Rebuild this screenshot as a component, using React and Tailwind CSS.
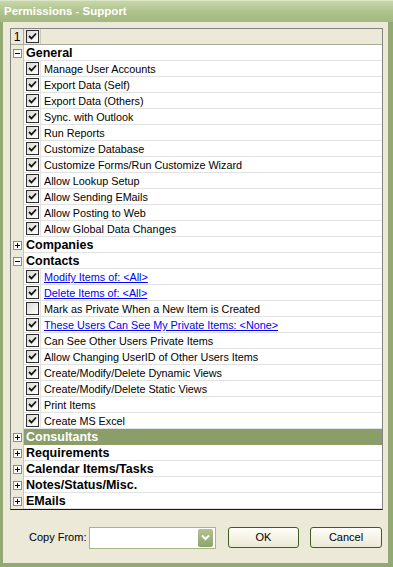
import React from 'react';

const rows = [
  { type: 'cat', label: 'General', open: true },
  { label: 'Manage User Accounts', on: true },
  { label: 'Export Data (Self)', on: true },
  { label: 'Export Data (Others)', on: true },
  { label: 'Sync. with Outlook', on: true },
  { label: 'Run Reports', on: true },
  { label: 'Customize Database', on: true },
  { label: 'Customize Forms/Run Customize Wizard', on: true },
  { label: 'Allow Lookup Setup', on: true },
  { label: 'Allow Sending EMails', on: true },
  { label: 'Allow Posting to Web', on: true },
  { label: 'Allow Global Data Changes', on: true },
  { type: 'cat', label: 'Companies' },
  { type: 'cat', label: 'Contacts', open: true },
  { label: 'Modify Items of: <All>', on: true, link: true },
  { label: 'Delete Items of: <All>', on: true, link: true },
  { label: 'Mark as Private When a New Item is Created', on: false },
  { label: 'These Users Can See My Private Items: <None>', on: true, link: true },
  { label: 'Can See Other Users Private Items', on: true },
  { label: 'Allow Changing UserID of Other Users Items', on: true },
  { label: 'Create/Modify/Delete Dynamic Views', on: true },
  { label: 'Create/Modify/Delete Static Views', on: true },
  { label: 'Print Items', on: true },
  { label: 'Create MS Excel', on: true },
  { type: 'cat', label: 'Consultants', selected: true },
  { type: 'cat', label: 'Requirements' },
  { type: 'cat', label: 'Calendar Items/Tasks' },
  { type: 'cat', label: 'Notes/Status/Misc.' },
  { type: 'cat', label: 'EMails' },
];

const Check = ({ on }) => (
  <div className="w-[13px] h-[13px] border border-[#2e2e2e] bg-gradient-to-br from-[#d9d9d2] to-white flex items-center justify-center">
    {on && (
      <svg width="9" height="9" viewBox="0 0 9 9">
        <path d="M1 4 L3.5 6.5 L8 1.5" fill="none" stroke="#111" strokeWidth="1.8" />
      </svg>
    )}
  </div>
);

const Expander = ({ open }) => (
  <div className="w-[9px] h-[9px] border border-[#8a8a8a] bg-white flex items-center justify-center relative">
    <div className="w-[5px] h-[1px] bg-black" />
    {!open && <div className="absolute w-[1px] h-[5px] bg-black" />}
  </div>
);

const App = () => {
  return (
    <div className="w-[393px] h-[567px] flex flex-col bg-[#93a972] font-['Liberation_Sans',Arial,sans-serif] text-[11px] text-black overflow-hidden">
      <div className="h-[22px] shrink-0 flex items-center pl-[4px] bg-gradient-to-b from-[#c8d7ab] via-[#afc28c] to-[#a2b781] border-t border-[#dbe6c6]">
        <span className="text-white font-bold text-[11.5px]">Permissions - Support</span>
      </div>
      <div className="flex-1 flex flex-col ml-[3px] mr-[5px] mb-[4px] bg-[#ece9d8] pt-[6px] pl-[7px] pr-[5px]">
        <div className="flex flex-col border border-[#848484] border-b-[#1a1a1a] bg-white">
          <div className="h-[16px] flex bg-[#ece9d8] border-b border-[#a9a799]">
            <div className="w-[13px] border-r border-[#a9a799] flex items-center justify-center text-[12px] leading-none">1</div>
            <div className="w-[17px] border-r border-[#c9c7ba] flex items-center justify-center">
              <Check on />
            </div>
            <div className="flex-1" />
          </div>
          {rows.map((r, i) => (
            <div key={i} className="h-[16px] flex">
              <div className="w-[13px] shrink-0 bg-[#ece9d8] border-r border-[#c8c6b9] flex items-center justify-center">
                {r.type === 'cat' && <Expander open={r.open} />}
              </div>
              {r.type === 'cat' ? (
                <div className={`flex-1 flex items-center pl-[2px] pt-[1px] font-bold text-[12.5px] border-b ${r.selected ? 'bg-[#8b9d69] text-white border-[#8b9d69]' : 'border-[#e2e2e2]'}`}>
                  {r.label}
                </div>
              ) : (
                <>
                  <div className="w-[17px] shrink-0 border-r border-b border-[#e2e2e2] flex items-center justify-center">
                    <Check on={r.on} />
                  </div>
                  <div className="flex-1 flex items-center pl-[3px] pt-[1px] border-b border-[#e2e2e2]">
                    <span className={`text-[10.8px] ${r.link ? 'text-[#0000ff] underline' : ''}`}>{r.label}</span>
                  </div>
                </>
              )}
            </div>
          ))}
        </div>
        <div className="flex-1 flex items-center pl-[19px] pt-[2px]">
          <span className="w-[60px] text-[11px]">Copy From:</span>
          <div className="w-[127px] h-[22px] border border-[#a3b882] bg-white flex justify-end items-center pr-[2px]">
            <div className="w-[15px] h-[18px] rounded-[2px] bg-gradient-to-b from-[#b1c28f] to-[#8ea46c] flex items-center justify-center">
              <svg width="9" height="7" viewBox="0 0 9 7">
                <path d="M1 1.5 L4.5 5 L8 1.5" fill="none" stroke="white" strokeWidth="2" />
              </svg>
            </div>
          </div>
          <button className="ml-[12px] w-[71px] h-[21px] rounded-[3px] border border-[#3d5e21] bg-gradient-to-b from-[#fffff9] to-[#ebe8d6] text-[11px]">OK</button>
          <button className="ml-[11px] w-[72px] h-[21px] rounded-[3px] border border-[#3d5e21] bg-gradient-to-b from-[#fffff9] to-[#ebe8d6] text-[11px]">Cancel</button>
        </div>
      </div>
    </div>
  );
};

export default App;
